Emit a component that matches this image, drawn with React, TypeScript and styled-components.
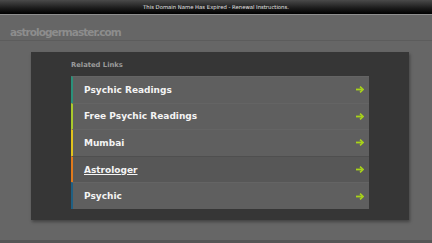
import React from "react";
import styled, { createGlobalStyle } from "styled-components";

const Global = createGlobalStyle`
  html, body { margin: 0; padding: 0; background: #666; }
  body { font-family: "DejaVu Sans", Verdana, sans-serif; overflow: hidden; }
`;

const Page = styled.div`
  width: 432px;
  height: 243px;
  display: flex;
  flex-direction: column;
  background: #666;
`;

const TopBar = styled.div`
  height: 14px;
  background: linear-gradient(#4a4a4a, #1a1a1a 60%, #000);
  border-bottom: 1px solid #8e8e8e;
  color: #e8e8e8;
  font-size: 5.3px;
  line-height: 14px;
  text-align: center;
  font-family: "DejaVu Sans", sans-serif;
`;

const Header = styled.div`
  height: 26px;
  box-sizing: border-box;
  background: #666;
  border-bottom: 1px solid #5c5c5c;
  padding: 0 0 1px 10px;
  display: flex;
  align-items: flex-end;
`;

const Domain = styled.div`
  color: #8d8d8d;
  font-weight: bold;
  font-size: 10.5px;
  line-height: 14px;
  letter-spacing: -0.95px;
`;

const Body = styled.div`
  flex: 1;
  padding: 11px 23px 0 31px;
  border-bottom: 3px solid #555;
`;

const Panel = styled.div`
  background: #363636;
  box-shadow: 1px 2px 3px rgba(0, 0, 0, 0.35);
  padding: 6px 40px 11px 40px;
  display: flex;
  flex-direction: column;
`;

const Title = styled.div`
  color: #9a9a9a;
  font-weight: bold;
  font-size: 6.8px;
  height: 18px;
  line-height: 15px;
`;

const List = styled.div`
  display: flex;
  flex-direction: column;
`;

const Row = styled.div<{ $accent: string; $hover?: boolean }>`
  height: 26.6px;
  box-sizing: border-box;
  border-left: 2px solid ${(p) => p.$accent};
  border-top: 1px solid ${(p) => (p.$hover ? "#4f4f4f" : "#646464")};
  background: ${(p) => (p.$hover ? "#575757" : "#5f5f5f")};
  display: flex;
  align-items: center;
  justify-content: space-between;
  padding: 0 5px 0 11px;
`;

const Label = styled.span<{ $hover?: boolean }>`
  color: #f4f4f4;
  font-weight: bold;
  font-size: 9px;
  text-decoration: ${(p) => (p.$hover ? "underline" : "none")};
`;

const Arrow = () => (
  <svg width="8" height="7" viewBox="0 0 8 7">
    <path d="M0 3.5 H6" stroke="#a9d418" strokeWidth="1.8" />
    <path d="M4 0.6 L7.2 3.5 L4 6.4" stroke="#a9d418" strokeWidth="1.6" fill="none" />
  </svg>
);

const items = [
  { label: "Psychic Readings", color: "#2b917a" },
  { label: "Free Psychic Readings", color: "#a9c92c" },
  { label: "Mumbai", color: "#e0c21d" },
  { label: "Astrologer", color: "#e07a1c", hover: true },
  { label: "Psychic", color: "#1f5f82" },
];

export default function App() {
  return (
    <Page>
      <Global />
      <TopBar>This Domain Name Has Expired - Renewal Instructions.</TopBar>
      <Header>
        <Domain>astrologermaster.com</Domain>
      </Header>
      <Body>
        <Panel>
          <Title>Related Links</Title>
          <List>
            {items.map((it) => (
              <Row key={it.label} $accent={it.color} $hover={it.hover}>
                <Label $hover={it.hover}>{it.label}</Label>
                <Arrow />
              </Row>
            ))}
          </List>
        </Panel>
      </Body>
    </Page>
  );
}
